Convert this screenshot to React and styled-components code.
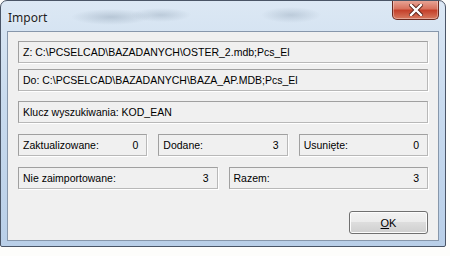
import React from 'react';
import styled, { createGlobalStyle } from 'styled-components';

const Global = createGlobalStyle`
  html, body { margin: 0; padding: 0; background: #fdfdfb; }
  body { width: 450px; height: 256px; overflow: hidden; }
`;

const Window = styled.div`
  box-sizing: border-box;
  width: 446px;
  height: 247px;
  display: flex;
  flex-direction: column;
  border: 1px solid #4a5566;
  border-radius: 7px 7px 2px 2px;
  background:
    radial-gradient(ellipse 40px 8px at 110px 16px, rgba(120,140,160,0.35), transparent),
    radial-gradient(ellipse 30px 7px at 160px 14px, rgba(120,140,160,0.3), transparent),
    radial-gradient(ellipse 30px 8px at 290px 14px, rgba(120,140,160,0.3), transparent),
    linear-gradient(180deg, #dce8f4 0%, #c9dbee 40%, #b9cfe8 100%);
  overflow: hidden;
`;

const TitleBar = styled.div`
  height: 30px;
  display: flex;
  align-items: flex-start;
  justify-content: space-between;
`;

const Title = styled.span`
  font-family: "Noto Sans", "Open Sans", sans-serif;
  font-size: 12px;
  color: #1e1e1e;
  padding: 8px 0 0 7px;
  text-shadow: 0 0 6px rgba(255,255,255,0.9);
`;

const CloseButton = styled.div`
  width: 45px;
  height: 19px;
  margin-right: 6px;
  margin-top: -1px;
  border: 1px solid #6b2a20;
  border-top: none;
  border-radius: 0 0 5px 5px;
  background: linear-gradient(180deg, #e9a99b 0%, #d8735f 45%, #c5412b 55%, #d77a60 100%);
  display: flex;
  align-items: center;
  justify-content: center;
  box-shadow: inset 0 0 0 1px rgba(255,255,255,0.35);
`;

const Client = styled.div`
  flex: 1;
  margin: 0 6px 5px 6px;
  border: 1px solid #8797ab;
  background: #f0f0f0;
  padding: 9px 10px 0 10px;
  display: flex;
  flex-direction: column;
  font-family: "Liberation Sans", Arial, sans-serif;
  font-size: 10.5px;
  color: #000;
`;

const Row = styled.div`
  display: flex;
  gap: 11px;
  margin-top: ${p => p.$top}px;
`;

const Field = styled.div`
  box-sizing: border-box;
  height: 22px;
  flex: 1;
  display: flex;
  align-items: center;
  justify-content: space-between;
  padding: 0 8px 0 4px;
  border: 1px solid;
  border-color: #a0a0a0 #b8b8b8 #b8b8b8 #a0a0a0;
  box-shadow: 1px 1px 0 #ffffff;
  white-space: nowrap;
  overflow: hidden;
`;

const Footer = styled.div`
  display: flex;
  justify-content: flex-end;
  margin-top: 22px;
`;

const Button = styled.button`
  width: 79px;
  height: 23px;
  font-family: "Liberation Sans", Arial, sans-serif;
  font-size: 11px;
  color: #000;
  border: 1px solid #707070;
  border-radius: 3px;
  background: linear-gradient(180deg, #f2f2f2 0%, #ebebeb 49%, #dddddd 50%, #cfcfcf 100%);
  box-shadow: inset 0 0 0 1px #fcfcfc;
  padding: 0;
  u { text-decoration: underline; }
`;

const CloseIcon = () => (
  <svg width="14" height="12" viewBox="0 0 14 12">
    <path d="M2 1 L12 11 M12 1 L2 11" stroke="#5a2218" strokeWidth="4.2" strokeLinecap="square" />
    <path d="M2 1 L12 11 M12 1 L2 11" stroke="#ffffff" strokeWidth="2.4" strokeLinecap="square" />
  </svg>
);

export default function App() {
  return (
    <>
      <Global />
      <Window>
        <TitleBar>
          <Title>Import</Title>
          <CloseButton><CloseIcon /></CloseButton>
        </TitleBar>
        <Client>
          <Row $top={0}>
            <Field>Z: C:\PCSELCAD\BAZADANYCH\OSTER_2.mdb;Pcs_El</Field>
          </Row>
          <Row $top={6}>
            <Field>Do: C:\PCSELCAD\BAZADANYCH\BAZA_AP.MDB;Pcs_El</Field>
          </Row>
          <Row $top={10}>
            <Field>Klucz wyszukiwania: KOD_EAN</Field>
          </Row>
          <Row $top={11}>
            <Field><span>Zaktualizowane:</span><span>0</span></Field>
            <Field><span>Dodane:</span><span>3</span></Field>
            <Field><span>Usunięte:</span><span>0</span></Field>
          </Row>
          <Row $top={11}>
            <Field><span>Nie zaimportowane:</span><span>3</span></Field>
            <Field><span>Razem:</span><span>3</span></Field>
          </Row>
          <Footer>
            <Button><u>O</u>K</Button>
          </Footer>
        </Client>
      </Window>
    </>
  );
}
